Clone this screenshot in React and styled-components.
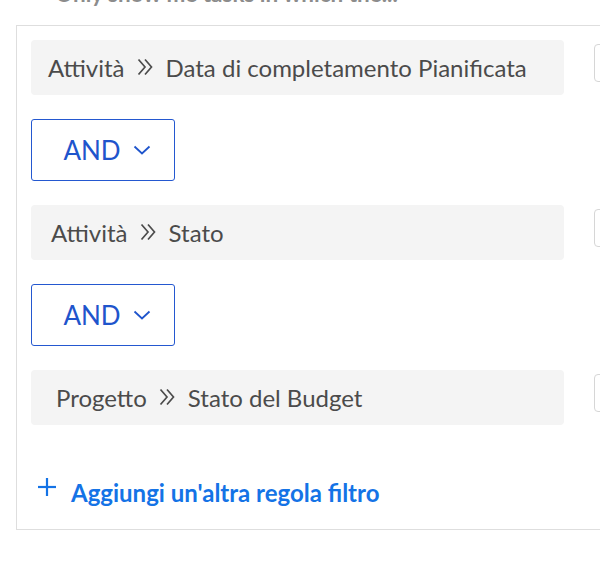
import React from "react";
import styled, { createGlobalStyle } from "styled-components";

const GlobalStyle = createGlobalStyle`
  html, body {
    margin: 0;
    padding: 0;
    background: #fff;
    overflow: hidden;
  }
  body {
    font-family: "Lato", "Liberation Sans", sans-serif;
  }
`;

const Page = styled.div`
  width: 600px;
  height: 564px;
  overflow: hidden;
`;

const Heading = styled.div`
  margin: -19px 0 0 55px;
  height: 26px;
  font-size: 22.5px;
  line-height: 26px;
  font-weight: 700;
  color: #8c8c8c;
  white-space: nowrap;
`;

const Panel = styled.div`
  margin: 18px 0 0 16px;
  width: 700px;
  border: 1px solid #dedede;
  padding: 14px 0 22px 14px;
  display: flex;
  flex-direction: column;
  align-items: flex-start;
  gap: 24px;
`;

const RuleRow = styled.div`
  display: flex;
  align-items: flex-start;
  gap: 30px;
`;

const Field = styled.div`
  flex: none;
  width: 533px;
  height: 55px;
  box-sizing: border-box;
  background: #f4f4f4;
  border-radius: 4px;
  display: flex;
  align-items: center;
  padding-left: ${(p) => p.$indent}px;
  padding-bottom: 1px;
  font-size: 24px;
  color: #4b4b4b;
  white-space: nowrap;
`;

const Chevrons = styled.svg`
  margin: 0 13px 0 12px;
  flex: none;
`;

const Operator = styled.div`
  width: 144px;
  height: 62px;
  box-sizing: border-box;
  border: 1px solid #2458d0;
  border-radius: 3px;
  display: flex;
  align-items: center;
  justify-content: center;
  gap: 12px;
  font-size: 26px;
  color: #1f55cc;
  padding-left: 8px;
`;

const ValueBox = styled.div`
  flex: none;
  margin-top: 4px;
  width: 200px;
  height: 38px;
  box-sizing: border-box;
  border: 1px solid #d6d6d6;
  border-radius: 4px;
  background: #fff;
`;

const AddLink = styled.div`
  margin-top: 28px;
  display: flex;
  align-items: flex-end;
  gap: 14px;
  padding-left: 6px;
  color: #1473e6;
  font-size: 24px;
  font-weight: 700;
`;

const rules = [
  { entity: "Attività", field: "Data di completamento Pianificata", indent: 17 },
  { entity: "Attività", field: "Stato", indent: 20 },
  { entity: "Progetto", field: "Stato del Budget", indent: 25 },
];

function DoubleChevron() {
  return (
    <Chevrons width="16" height="18" viewBox="0 0 16 18" fill="none" stroke="#4b4b4b" strokeWidth="1.7">
      <polyline points="1.5,1.5 8,9 1.5,16.5" />
      <polyline points="8,1.5 14.5,9 8,16.5" />
    </Chevrons>
  );
}

function AndButton() {
  return (
    <Operator>
      AND
      <svg width="18" height="10" viewBox="0 0 18 10" fill="none" stroke="#1f55cc" strokeWidth="1.8">
        <polyline points="1.5,1.5 9,8.5 16.5,1.5" />
      </svg>
    </Operator>
  );
}

export default function App() {
  return (
    <Page>
      <GlobalStyle />
      <Heading>Only show me tasks in which the...</Heading>
      <Panel>
        {rules.map((r, i) => (
          <React.Fragment key={i}>
            {i > 0 && <AndButton />}
            <RuleRow>
              <Field $indent={r.indent}>
                {r.entity}
                <DoubleChevron />
                {r.field}
              </Field>
              <ValueBox />
            </RuleRow>
          </React.Fragment>
        ))}
        <AddLink>
          <svg width="20" height="20" viewBox="0 0 20 20" stroke="#1473e6" strokeWidth="2.2" style={{ marginBottom: 10 }}>
            <line x1="10" y1="1" x2="10" y2="19" />
            <line x1="1" y1="10" x2="19" y2="10" />
          </svg>
          Aggiungi un'altra regola filtro
        </AddLink>
      </Panel>
    </Page>
  );
}
